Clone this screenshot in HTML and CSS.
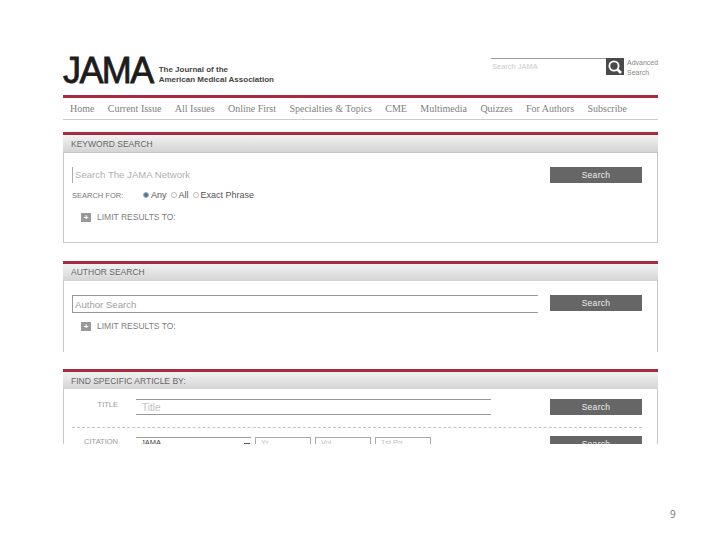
FILE: index.html
```html
<!DOCTYPE html>
<html lang="en">
<head>
<meta charset="utf-8">
<title>JAMA Search</title>
<link rel="stylesheet" href="styles.css">
</head>
<body>
<div class="slide">
  <header class="masthead">
    <div class="brand">
      <span class="logo">JAMA</span>
      <span class="tagline">The Journal of the<br>American Medical Association</span>
    </div>
    <div class="quick">
      <span class="quick-field">Search JAMA</span>
      <span class="quick-btn">
        <svg width="18" height="18" viewBox="0 0 18 18"><circle cx="8" cy="8" r="4.6" fill="none" stroke="#fff" stroke-width="1.8"/><path d="M11.5 11.5L15 15" stroke="#fff" stroke-width="2.6"/></svg>
      </span>
      <span class="quick-adv">Advanced<br>Search</span>
    </div>
  </header>
  <nav class="nav">
    <span>Home</span><span>Current Issue</span><span>All Issues</span><span>Online First</span><span>Specialties &amp; Topics</span><span>CME</span><span>Multimedia</span><span>Quizzes</span><span>For Authors</span><span>Subscribe</span>
  </nav>

  <section class="panel panel-keyword">
    <h2 class="panel-title">KEYWORD SEARCH</h2>
    <div class="panel-body">
      <div class="row">
        <div class="field field-left">Search The JAMA Network</div>
        <span class="btn">Search</span>
      </div>
      <div class="options">
        <span class="options-label">SEARCH FOR:</span>
        <span class="radio radio-on"></span><span class="opt">Any</span>
        <span class="radio"></span><span class="opt">All</span>
        <span class="radio"></span><span class="opt">Exact Phrase</span>
      </div>
      <div class="limit"><span class="plus">+</span>LIMIT RESULTS TO:</div>
    </div>
  </section>

  <section class="panel panel-author">
    <h2 class="panel-title">AUTHOR SEARCH</h2>
    <div class="panel-body open">
      <div class="row">
        <div class="field field-box">Author Search</div>
        <span class="btn">Search</span>
      </div>
      <div class="limit limit-author"><span class="plus">+</span>LIMIT RESULTS TO:</div>
    </div>
  </section>

  <section class="panel panel-find">
    <h2 class="panel-title">FIND SPECIFIC ARTICLE BY:</h2>
    <div class="panel-body open">
      <div class="find-row">
        <span class="find-label">TITLE</span>
        <div class="field field-lines">Title</div>
        <span class="btn">Search</span>
      </div>
      <div class="dash"></div>
      <div class="find-row">
        <span class="find-label">CITATION</span>
        <div class="citation">
          <div class="select">JAMA<span class="caret"></span></div>
          <div class="small">Yr</div>
          <div class="small">Vol</div>
          <div class="small">1st Pg</div>
        </div>
        <span class="btn">Search</span>
      </div>
    </div>
  </section>
</div>
<footer class="page-num">9</footer>
</body>
</html>
```

FILE: styles.css
```css
html, body { margin: 0; padding: 0; background: #fff; }
body { width: 720px; height: 540px; overflow: hidden; position: relative; font-family: "Liberation Sans", Arial, sans-serif; }
.slide { width: 595px; margin-left: 63px; padding-top: 57px; }

.masthead { display: flex; justify-content: space-between; height: 38px; }
.brand { display: flex; align-items: flex-start; }
.logo { font-size: 36px; line-height: 27px; letter-spacing: -1.6px; color: #1c1c1c; height: 27px; margin-right: 6px; -webkit-text-stroke: 0.8px #1c1c1c; }
.tagline { font-size: 8px; line-height: 10px; font-weight: bold; color: #444; padding-top: 8px; }
.quick { display: flex; align-items: flex-start; margin-top: 1px; }
.quick-field { width: 115px; height: 16px; box-sizing: border-box; border-top: 1px solid #999; font-size: 7.5px; line-height: 15px; color: #ccc; padding-left: 1px; }
.quick-btn { width: 18px; height: 17px; background: #4a4a4a; display: flex; align-items: center; justify-content: center; }
.quick-adv { font-size: 7px; line-height: 10px; color: #888; margin-left: 3px; width: 31px; }

.nav { border-top: 3px solid #a92b42; border-bottom: 1px solid #ccc; height: 21px; display: flex; padding-left: 7px; gap: 13.4px; font-family: "Liberation Serif", serif; font-size: 10px; line-height: 22px; color: #808080; white-space: nowrap; }

.panel { margin-top: 12px; }
.panel-title { margin: 0; height: 17px; border-top: 3px solid #a92b42; background: linear-gradient(#f2f2f2, #d4d4d4); font-size: 8.5px; font-weight: normal; line-height: 18px; color: #666; padding-left: 8px; }
.panel-author .panel-title { line-height: 17px; }
.panel-body { box-sizing: border-box; border: 1px solid #c8c8c8; position: relative; }
.panel-body.open { border-bottom: 0; border-top: 0; }

.panel-keyword .panel-body { height: 91px; padding: 14px 15px 0 8px; }
.panel-author { margin-top: 18px; }
.panel-author .panel-body { height: 71px; padding: 14px 15px 0 8px; overflow: hidden; }
.panel-find { margin-top: 17px; }
.panel-find .panel-body { height: 55px; padding: 10px 15px 0 8px; overflow: hidden; }

.row { display: flex; justify-content: space-between; align-items: flex-start; }
.btn { flex: none; width: 92px; height: 16px; background: #666; color: #eee; font-size: 8.5px; line-height: 16px; text-align: center; letter-spacing: .3px; }

.field { font-size: 10px; color: #b0b0b0; box-sizing: border-box; }
.field-left { font-size: 9.6px; border-left: 1px solid #aaa; height: 16px; line-height: 16px; padding-left: 2px; }
.field-box { font-size: 9.6px; width: 466px; height: 18px; border: 1px solid #999; border-right: 0; line-height: 17px; padding-left: 2px; color: #a0a0a0; }

.options { display: flex; align-items: center; height: 12px; margin-top: 6px; font-size: 9px; color: #555; }
.options-label { font-size: 7.5px; color: #777; width: 71px; }
.radio { width: 6px; height: 6px; border-radius: 50%; border: 1px solid #bbb; box-sizing: border-box; margin-right: 2px; }
.radio-on { background: #4a7597; border-color: #9db4c6; }
.opt { margin-right: 4px; }

.limit { display: flex; align-items: center; font-size: 8.5px; color: #808080; margin: 11px 0 0 9px; height: 10px; }
.limit-author { margin-top: 8px; }
.plus { width: 10px; height: 9px; background: #999; color: #fff; font-size: 8px; line-height: 9px; font-weight: bold; text-align: center; margin-right: 6px; }

.find-row { display: flex; align-items: flex-start; }
.find-label { width: 46px; text-align: right; font-size: 7.5px; line-height: 10px; color: #999; margin-right: 18px; padding-top: 1px; }
.field-lines { width: 355px; height: 16px; border-top: 1px solid #999; border-bottom: 1px solid #999; line-height: 15px; padding-left: 6px; color: #c0c0c0; margin-right: 59px; }
.dash { height: 0; border-top: 1px dashed #c4c4c4; margin: 12px 0 8px; }
.citation { display: flex; gap: 4px; width: 355px; margin-right: 59px; padding-top: 1px; }
.select { flex: none; width: 115px; height: 16px; box-sizing: border-box; border-top: 1px solid #999; font-size: 7.5px; line-height: 9px; color: #444; position: relative; padding-left: 5px; }
.caret { position: absolute; right: 1px; top: 5px; width: 6px; height: 2px; background: #555; }
.small { flex: none; width: 56px; height: 16px; box-sizing: border-box; border: 1px solid #aaa; font-size: 7.5px; line-height: 10px; color: #c0c0c0; padding-left: 5px; }

.page-num { position: absolute; left: 670px; top: 507px; font-family: "Open Sans", sans-serif; font-size: 10px; line-height: 14px; color: #777; }
```
